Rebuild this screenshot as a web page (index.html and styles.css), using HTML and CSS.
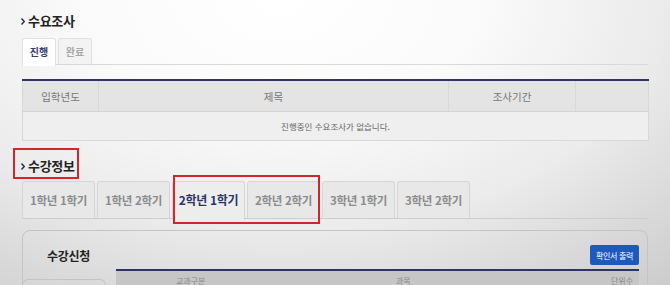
FILE: index.html
```html
<!DOCTYPE html>
<html lang="ko">
<head>
<meta charset="utf-8">
<link rel="stylesheet" href="styles.css">
</head>
<body>
<div class="page">
  <h2 class="sec-title"><svg class="chev" width="4" height="7" viewBox="0 0 4 7"><path d="M0.5 0.5 L3.2 3.5 L0.5 6.5" fill="none" stroke="#1f2a5c" stroke-width="1.4"/></svg>수요조사</h2>
  <div class="tabs small">
    <div class="tab on">진행</div>
    <div class="tab">완료</div>
  </div>
  <table class="survey">
    <colgroup><col class="c1"><col class="c2"><col class="c3"><col class="c4"></colgroup>
    <thead>
      <tr><th>입학년도</th><th>제목</th><th>조사기간</th><th></th></tr>
    </thead>
    <tbody>
      <tr><td colspan="4">진행중인 수요조사가 없습니다.</td></tr>
    </tbody>
  </table>

  <div class="sec2">
    <h2 class="sec-title t2"><svg class="chev" width="4" height="7" viewBox="0 0 4 7"><path d="M0.5 0.5 L3.2 3.5 L0.5 6.5" fill="none" stroke="#1f2a5c" stroke-width="1.4"/></svg>수강정보</h2>
    <div class="mark mark1"></div>
    <div class="tabs big">
      <div class="tab">1학년 1학기</div>
      <div class="tab">1학년 2학기</div>
      <div class="tab on">2학년 1학기</div>
      <div class="tab">2학년 2학기</div>
      <div class="tab">3학년 1학기</div>
      <div class="tab">3학년 2학기</div>
    </div>
    <div class="mark mark2"></div>
  </div>

  <div class="card">
    <div class="card-head">
      <span class="card-title">수강신청</span>
      <button class="btn">확인서 출력</button>
    </div>
    <div class="card-body">
      <div class="side"></div>
      <div class="grid-head">
        <span class="g1">교과구분</span><span class="g2">과목</span><span class="g3">단위수</span>
      </div>
    </div>
  </div>
</div>
</body>
</html>
```
FILE: styles.css
```css
html, body { margin: 0; padding: 0; height: 285px; overflow: hidden; }
body {
  font-family: "Noto Sans CJK KR", "Noto Sans", sans-serif;
  background: radial-gradient(ellipse 95% 135% at 42% 0%, #ffffff 0%, #fbfbfb 30%, #ebebeb 60%, #d9d9d9 80%, #c9c9c9 100%);
  color: #333;
}
.page { padding: 13px 22px 0 22px; position: relative; }
.sec-title {
  margin: 0; font-size: 13px; font-weight: 700; line-height: 16px; color: #222;
  display: flex; align-items: center; gap: 3px; letter-spacing: -0.3px;
}
.chev { margin-left: -1px; }
.tabs { display: flex; gap: 2px; border-bottom: 1px solid #d9d9d9; }
.tabs.small { margin-top: 9px; height: 26px; }
.tabs.small .tab {
  width: 32px; font-size: 10px; line-height: 26px; text-align: center;
  border: 1px solid #e0e0e0; border-bottom: none; border-radius: 3px 3px 0 0;
  background: #f3f3f3; color: #a8a8a8; font-weight: 700;
}
.tabs.small .tab.on { background: #fff; color: #34406c; height: 27px; }
.survey {
  margin-top: 14px; width: 626px; border-collapse: collapse; table-layout: fixed;
  border-top: 2px solid #2e3566; font-size: 10px; color: #777;
}
.survey th {
  height: 28px; background: #e4e4e4; font-weight: 400; font-size: 10.5px;
  border-right: 1px solid #d8d8d8; border-bottom: 1px solid #d4d4d4; color: #777;
}
.survey th:first-child { border-left: 1px solid #d8d8d8; }
.survey th:last-child { border-right: 1px solid #d8d8d8; }
.c1 { width: 76px; } .c2 { width: 350px; } .c3 { width: 127px; } .c4 { width: 73px; }
.survey td {
  height: 26px; background: #efefef; text-align: center; font-size: 8.5px; color: #666;
  border: 1px solid #d8d8d8; border-top: none;
}
.sec2 { position: relative; margin-top: 17px; }
.t2 { line-height: 16px; }
.mark { position: absolute; border: 2px solid #d4262a; pointer-events: none; }
.mark1 { left: -9px; top: -10px; width: 62px; height: 27px; }
.mark2 { left: 151px; top: 17px; width: 143px; height: 45px; }
.tabs.big { margin-top: 7px; height: 37px; border-bottom-color: #cdcdcd; }
.tabs.big .tab {
  width: 71px; font-size: 11.5px; line-height: 36px; text-align: center;
  border: 1px solid #d6d6d6; border-bottom: none; border-radius: 3px 3px 0 0;
  background: #e8e8e8; color: #8c8c8c; font-weight: 700; letter-spacing: -0.3px;
}
.tabs.big .tab.on { background: #ededed; color: #2c3566; height: 38px; font-size: 12px; }
.card {
  margin-top: 11px; border: 1px solid #c4c4c4; border-radius: 8px; height: 80px;
}
.card-head { display: flex; justify-content: space-between; align-items: center; padding: 10px 8px 0 24px; height: 28px; }
.card-title { font-size: 12px; font-weight: 700; color: #222; letter-spacing: -0.3px; }
.btn {
  background: #1e59bd; color: #fff; border: none; border-radius: 2px;
  width: 49px; height: 20px; font-size: 8px; padding: 0; font-family: inherit; letter-spacing: -0.3px;
}
.card-body { display: flex; margin-top: 0; }
.side { width: 82px; height: 20px; margin-top: 10px; margin-left: -1px; border: 1px solid #c4c4c4; border-bottom: none; border-radius: 6px 6px 0 0; }
.grid-head {
  margin-left: 10px; flex: 1; margin-right: 8px; border-top: 2px solid #2e3566; background: #c6c6c6;
  height: 20px; position: relative; font-size: 8px; color: #888;
}
.grid-head span { position: absolute; top: 5px; line-height: 10px; }
.g1 { left: 60px; } .g2 { left: 280px; } .g3 { right: 6px; }
```
